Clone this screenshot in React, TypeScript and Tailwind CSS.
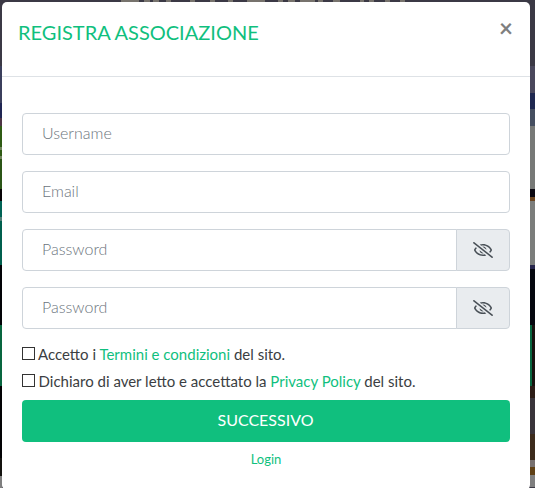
import { FaRegEyeSlash } from 'react-icons/fa';

const inputClass =
  'h-[42px] w-full min-w-0 border border-[#ced4da] bg-white px-[19px] pb-[3px] text-[16px] font-light text-[#495057] placeholder:text-[#6c757d] placeholder:opacity-100';

const checkboxClass = 'mb-px size-[13px] appearance-none border border-[#333]';

function PasswordField() {
  return (
    <div className="flex h-[42px]">
      <input className={`${inputClass} rounded-l`} placeholder="Password" type="password" />
      <button
        aria-label="Mostra password"
        className="-ml-px flex w-[54px] shrink-0 items-center justify-center rounded-r border border-[#ced4da] bg-[#e9ecef] text-[#495057]"
        type="button"
      >
        <FaRegEyeSlash className="h-4 w-5" />
      </button>
    </div>
  );
}

function LeftBackdrop() {
  return (
    <div className="flex w-[2px] shrink-0 flex-col">
      <div className="h-[66px] bg-[#3b3945]" />
      <div className="h-[37px] bg-[#3b3f5c]" />
      <div className="h-[15px] bg-[#202653]" />
      <div className="h-2 bg-[#4d3545]" />
      <div className="h-[21px] bg-[#2f5b14]" />
      <div className="h-[3px] bg-[#70845c]" />
      <div className="h-[6px] bg-[#2f5b14]" />
      <div className="h-[3px] bg-[#70845c]" />
      <div className="h-[30px] bg-[#2b5517]" />
      <div className="h-3 bg-[#080406]" />
      <div className="h-4 bg-[#006355]" />
      <div className="h-1 bg-[#507d76]" />
      <div className="h-[44px] bg-[#005f4d]" />
      <div className="h-[60px] bg-[#020307]" />
      <div className="h-[61px] bg-[#08663f]" />
      <div className="h-[72px] bg-[#020204]" />
      <div className="h-[18px] bg-[#14130f]" />
      <div className="h-3 bg-[#7f7f7f]" />
    </div>
  );
}

function RightBackdrop() {
  return (
    <div className="flex w-[5px] shrink-0 flex-col">
      <div className="h-[66px] bg-[#3b3945]" />
      <div className="h-[27px] bg-[#4a485c]" />
      <div className="h-4 bg-[#1f2850]" />
      <div className="h-[17px] bg-[#454e60]" />
      <div className="h-[63px] bg-[#777977]" />
      <div className="h-2 bg-[#0a0710]" />
      <div className="h-1 bg-[#6b4520]" />
      <div className="h-[64px] bg-[#7b7d7b]" />
      <div className="h-1 bg-[#27264c]" />
      <div className="h-[56px] bg-[#05070f]" />
      <div className="h-[61px] border-l-2 border-[#08663f] bg-[#19110f]" />
      <div className="h-3 bg-[#2c1c16]" />
      <div className="h-[36px] bg-[#39343a]" />
      <div className="h-[26px] bg-[#3c2b1c]" />
      <div className="h-[7px] bg-[#77706f]" />
      <div className="h-2 bg-[#5f4015]" />
      <div className="h-3 bg-[#7f7f7f]" />
    </div>
  );
}

// [gap before, width] of each piece of the page headline left above the dialog
const headlineSlivers = [
  [119, 18],
  [5, 6],
  [3, 6],
  [7, 5],
  [19, 5],
  [15, 5],
  [13, 5],
  [14, 18],
  [13, 5],
  [5, 7],
  [5, 15],
  [3, 5],
  [10, 7],
  [20, 4],
  [5, 5],
  [11, 5],
  [10, 5],
];

function TopBackdrop() {
  return (
    <div className="flex h-[2px] overflow-hidden bg-[#3b3945]">
      {headlineSlivers.map(([gap, width], index) => (
        <div
          className="h-[2px] shrink-0 bg-[#77736d]"
          key={index}
          style={{ marginLeft: gap, width }}
        />
      ))}
    </div>
  );
}

export default function App() {
  return (
    <div className="flex h-[488px] w-[535px] overflow-hidden bg-[#3b3945] font-['Lato',sans-serif]">
      <LeftBackdrop />

      <div className="w-[528px] shrink-0">
        <TopBackdrop />
        <div className="h-[488px] rounded-[5px] bg-white" role="dialog">
          <div className="flex h-[75px] items-start justify-between border-b border-[#dee2e6] pr-[17px] pl-4">
            <h5 className="mt-[15px] text-[20px] leading-[30px] text-[#10bf7e]">
              REGISTRA ASSOCIAZIONE
            </h5>
            <button
              aria-label="Chiudi"
              className="mt-[14px] text-[24px] leading-6 font-bold text-[#7f7f7f]"
              type="button"
            >
              ×
            </button>
          </div>

          <form className="px-5 pt-9">
            <div className="flex flex-col gap-4">
              <input className={`${inputClass} rounded`} placeholder="Username" type="text" />
              <input className={`${inputClass} rounded`} placeholder="Email" type="email" />
              <PasswordField />
              <PasswordField />
            </div>

            <div className="mt-3 flex flex-col gap-px text-[15px] leading-[26px] text-[#3b3e42]">
              <label className="flex items-center gap-[3px]">
                <input className={checkboxClass} type="checkbox" />
                <span>
                  Accetto i <a className="text-[#10bf7e]">Termini e condizioni</a> del sito.
                </span>
              </label>
              <label className="flex items-center gap-[3.6px]">
                <input className={checkboxClass} type="checkbox" />
                <span>
                  Dichiaro di aver letto e accettato la{' '}
                  <a className="text-[#10bf7e]">Privacy Policy</a> del sito.
                </span>
              </label>
            </div>

            <button
              className="mt-[6px] h-[42px] w-full rounded bg-[#10bf7e] pr-px pb-[2px] text-[16px] text-white"
              type="button"
            >
              SUCCESSIVO
            </button>
            <a className="mt-[7px] block text-center text-[13px] leading-5 text-[#10bf7e]">
              Login
            </a>
          </form>
        </div>
      </div>

      <RightBackdrop />
    </div>
  );
}
